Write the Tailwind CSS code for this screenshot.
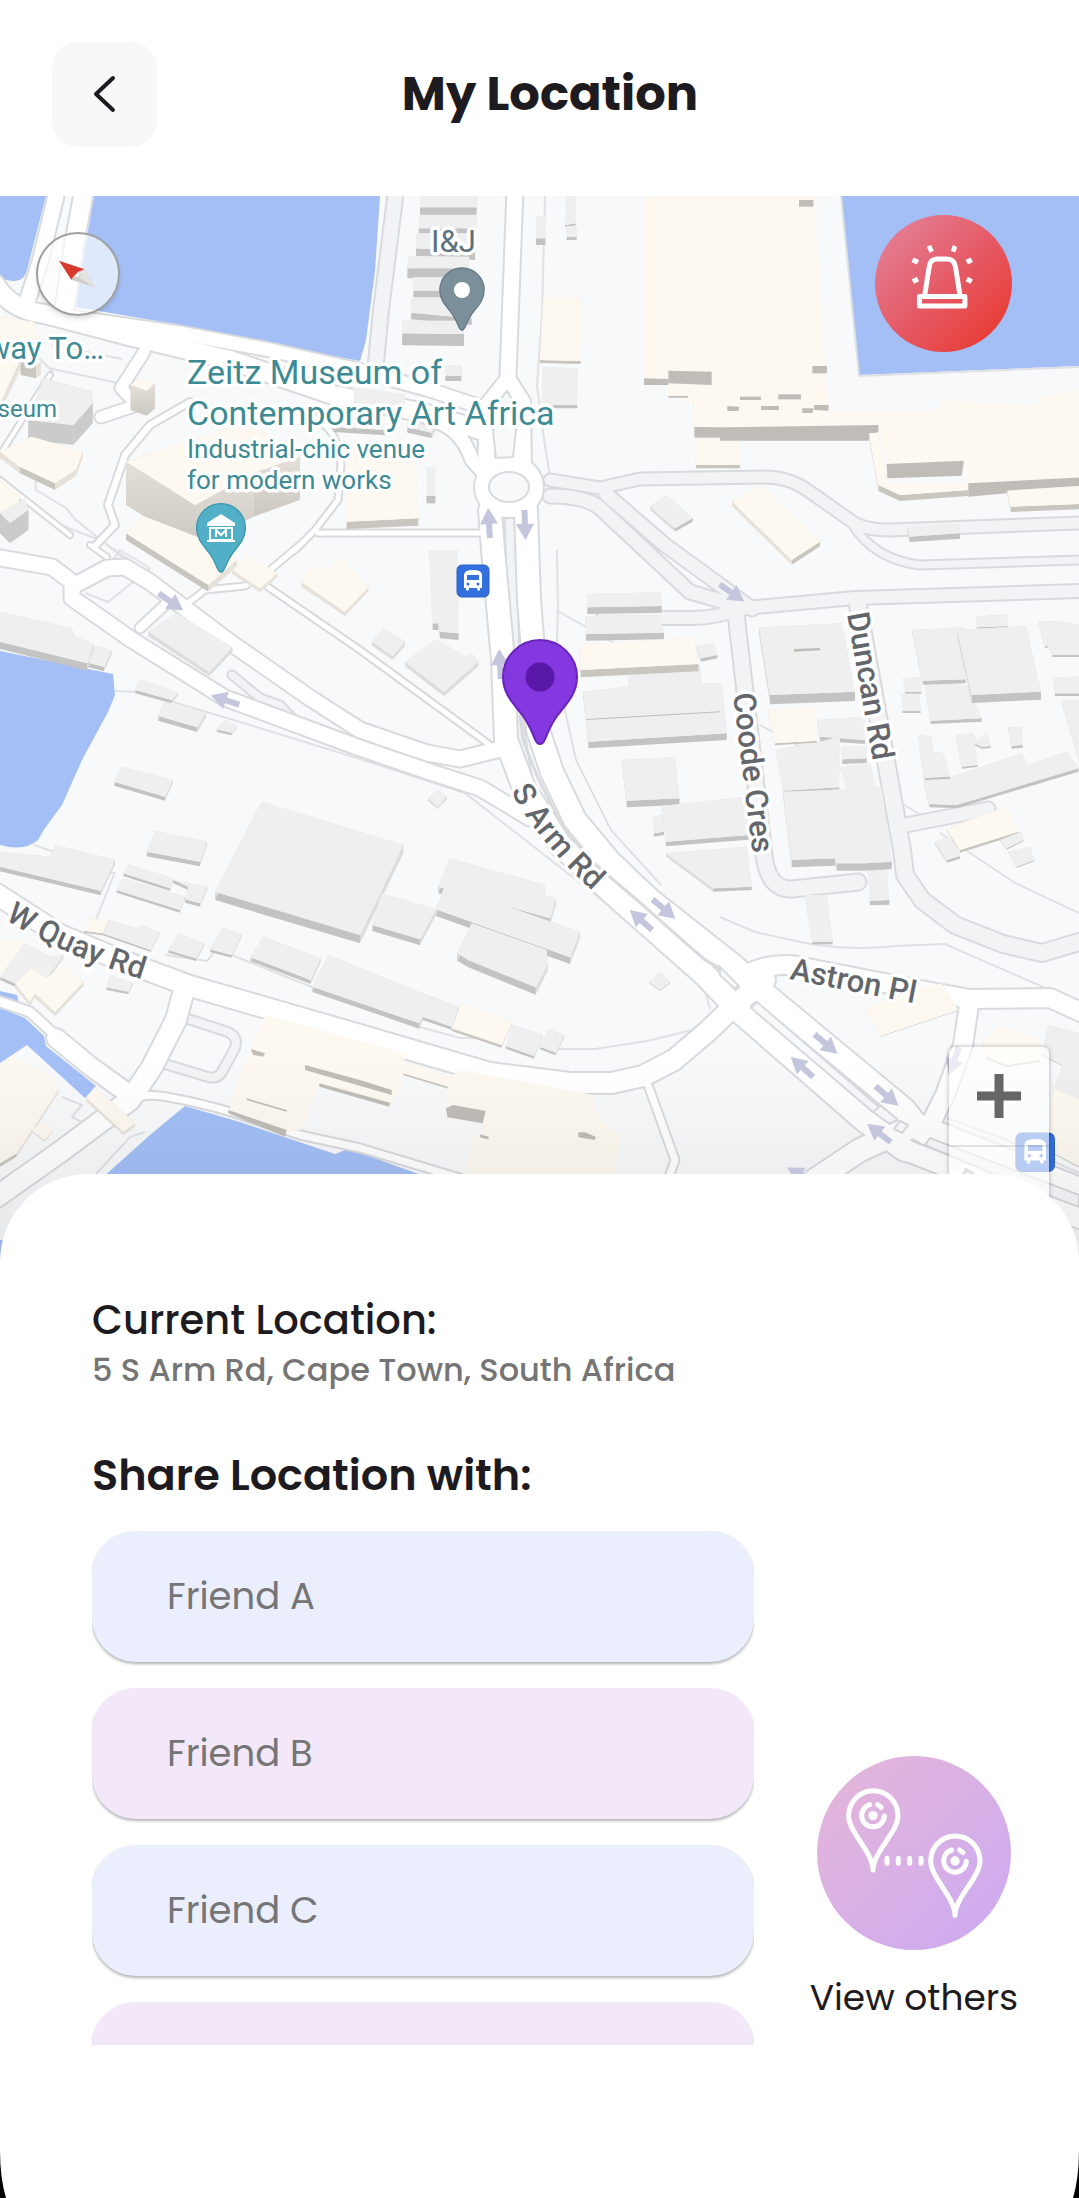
<!DOCTYPE html>
<html lang="en">
<head>
  <meta charset="UTF-8">
  <meta name="viewport" content="width=device-width, initial-scale=1.0">
  <title>My Location</title>
  <script src="https://cdn.jsdelivr.net/npm/@tailwindcss/browser@4"></script>
</head>
<body class="bg-white font-[Poppins,Inter,sans-serif] text-[#1d1b20]">
  <div class="relative flex min-h-screen flex-col overflow-hidden">

    <header class="flex h-[196px] items-center pb-2 pl-[52px] pr-[136px]">
      <button type="button" aria-label="Back" class="flex size-[105px] items-center justify-center rounded-[26px] bg-[#f8f8f8]">
        <svg class="size-12" viewBox="0 0 48 48" fill="none" stroke="#1d1b20" stroke-width="4" stroke-linecap="round" stroke-linejoin="round">
          <path d="M32 8 15 24l17 16" />
        </svg>
      </button>
      <h1 class="flex-1 text-center text-5xl font-bold">My Location</h1>
    </header>

    <section aria-label="Map" class="relative h-[1074px] overflow-hidden bg-[#f8f9fb]">
      <svg id="map" class="h-full w-full" viewBox="0 196 1079 1074" preserveAspectRatio="xMidYMin slice" font-family="Roboto, sans-serif">
        <defs>
          <linearGradient id="shade" x1="0" y1="0" x2="0" y2="1">
            <stop offset="0" stop-color="#000" stop-opacity="0" />
            <stop offset="1" stop-color="#000" stop-opacity=".08" />
          </linearGradient>
          <linearGradient id="wall" x1="0" y1="0" x2="0" y2="1">
            <stop offset="0" stop-color="#e4e0d9" />
            <stop offset="1" stop-color="#cbc7c1" />
          </linearGradient>
          <path id="pin" d="M-37 0a37 37 0 0 1 74 0c0 18-12 28-20 39-12 17-11 28-17 28s-5-11-17-28c-8-11-20-21-20-39z" />
          <path id="arrow" d="M0-15 9 1H3V15h-6V1H-9z" />
          <g id="bus">
            <rect width="32" height="32" rx="5" fill="#3470dd" stroke="#2b60c4" />
            <path d="M7 10q0-5 9-5t9 5v13h-2v2q-3 2-3-2h-8q0 4-3 2v-2H7z" fill="#fff" />
            <path d="M10 10h12v5H10z" fill="#3470dd" />
            <circle cx="11" cy="19" r="1.500" fill="#3470dd" />
            <circle cx="21" cy="19" r="1.500" fill="#3470dd" />
          </g>
          <path id="s-arm" d="M511 791Q540 847 610 906" />
          <path id="w-quay" d="M5 919Q60 955 154 983" />
        </defs>

        <g id="water" fill="#a3bff6">
          <path d="M0 196h46L27 270q-3 12-14 11L0 279z" />
          <path d="M94 196h286l-5 75-9 69-6 21-90-17-90-19-75-13-30-5z" />
          <path d="M841 196h238v170l-220 9z" />
          <path d="M0 651l113 23 2 21-7 17-26 48-20 45-17 23-7 12q-14 12-38 5z" />
          <path d="M0 991l17 4 2 9-19-6zM0 1008l25 10 19 18 2 10 50 40-11 12-58-53-27 18z" />
          <path d="M185 1106l55 16 95 32 10-4 15 3 70 25H102l48-43zM0 1240h4v40H0z" />
        </g>
        <path d="M841 196l18 180 220-9" fill="none" stroke="#dfe1e4" stroke-width="2" />

        <g id="paths" fill="none" stroke="#e0e1e4" stroke-width="2">
          <path d="M545 196l-3 120-5 70 8 60 5 30M556 610l164 94M557 550l1 60-2 60 20 90 35 70 50 55M760 725l120 65 41 25M940 833l75 50 64 30" />
          <path d="M115 691l25 1 110 33 110 34 105 34 160 125 60 45 18 18 7 28M692 1030l-45 11-52 8h-40M720 917l35 15 50 11q45 8 90 3l50-2 105 46" />
          <path d="M20 320l3 22 30 30M52 345l70 14M48 368l70 15M33 440l3 50 30 18 10 12 50 40M60 525l40 15 30 20M100 578l20-28 30 18-15 12M85 593l23 9 25-20" />
          <path d="M115 872l-20 50M34 845l80 28M165 955l42 6 10-12 95 38M420 1027l40 11h20M62 1097l20 8-10 12 15 8M95 1175l35-38 15-5" />
          <path d="M947 1118l60 22 72 33M770 1020h10" />
        </g>

        <g id="roads" fill="none" stroke-linejoin="round" stroke-linecap="round"></g>

        <!-- roundabout and traffic islands -->
        <g fill="#f8f9fb" stroke="#d8dade" stroke-width="2">
          <path d="M507 391l-14 29 5 38 14-1 18 0-2-42q-2-18-21-24z" fill="#fff" stroke="none" />
          <path d="M507 391q-7 8-13 20l-1 20 3 27 17-1 3-27-1-20q-3-12-8-19z" />
          <ellipse cx="509" cy="487" rx="20" ry="15" />
          <path d="M757 1002l-6 6 122 104 6-5z" />
          <path d="M900 1121l8 4-6 8-8-4zM930 1138l-5 7 90 38 64 24v-12z" />
          <path d="M720 967l18 18-3 4-15-14z" />
          <path d="M520 715l3 25 15 38 22 44 30 38 47 40 68 60 15 8" fill="none" stroke-width="3" />
        </g>
        <g id="buildings"></g>
        <rect y="1060" width="1079" height="214" fill="url(#shade)" />
        <g id="arrows" fill="#c3c6dc"></g>

        <g fill="#3c8a94" stroke="#fff" stroke-width="7" stroke-linejoin="round" paint-order="stroke">
          <text x="187" y="384" font-size="34">Zeitz Museum of</text>
          <text x="187" y="425" font-size="34">Contemporary Art Africa</text>
          <text x="187" y="458" font-size="26">Industrial-chic venue</text>
          <text x="187" y="489" font-size="26">for modern works</text>
          <text x="104" y="359" font-size="31" text-anchor="end">way To…</text>
          <text x="57" y="417" font-size="24" text-anchor="end">seum</text>
          <text x="431" y="252" font-size="31" fill="#5c707d">I&amp;J</text>
        </g>
        <g fill="#63666b" stroke="#fff" stroke-width="7" stroke-linejoin="round" paint-order="stroke" font-size="31" font-weight="500">
          <text transform="translate(847 614) rotate(80)">Duncan Rd</text>
          <text transform="translate(733 694) rotate(83)">Coode Cres</text>
          <text transform="translate(789 979) rotate(11)">Astron Pl</text>
          <text><textPath href="#s-arm">S Arm Rd</textPath></text>
          <text><textPath href="#w-quay">W Quay Rd</textPath></text>
          <text transform="translate(953 1186) rotate(28)" fill="#a5a8ac">D</text>
        </g>

        <use href="#pin" transform="translate(462 290) scale(.6)" fill="#7b8f9b" stroke="#627783" stroke-width="2" />
        <circle cx="462" cy="290" r="8" fill="#fff" />
        <use href="#pin" transform="translate(221 528) scale(.66)" fill="#51b0c8" stroke="#3d95ac" stroke-width="2" />
        <path d="M221 514l14 9v3h-28v-3zM209 527h24v13h2v2h-28v-2h2zm2 2v10h20v-10z" fill="#fff" fill-rule="evenodd" />
        <path d="M216 537v-7l5 5 5-5v7" fill="none" stroke="#fff" stroke-width="2" />
        <use href="#bus" x="457" y="565" />
        <use href="#bus" transform="translate(1016 1133) scale(1.2)" />
        <use href="#pin" transform="translate(540 677)" fill="#8338e0" stroke="#6a24bd" stroke-width="2" />
        <circle cx="540" cy="677" r="14.500" fill="#5a18a8" />
      </svg>

      <button type="button" aria-label="Reset north" class="absolute left-9 top-9 flex size-[84px] rounded-full border-2 border-[#a0a0a0] bg-white/65 shadow-md">
        <svg class="size-full" viewBox="37 232 84 84">
          <path d="M59 260l27 9-7 3-4 4-3 4z" fill="#d83a2c" />
          <path d="M86 269l11 19-25-8 3-4q3 2 5 0t-1-4z" fill="#cfcdc9" />
          <path d="M86 269l11 19-17-10q4-3 0-5z" fill="#e4e3e0" />
        </svg>
      </button>

      <button type="button" aria-label="Emergency alert" class="absolute right-[67px] top-[19px] size-[137px] rounded-full bg-linear-135 from-[#e2859f] from-0% via-[#e55a66] via-50% to-[#e83e38] to-85%">
        <svg class="size-full" viewBox="466 74 410 410" fill="none" stroke="#fff" stroke-width="15" stroke-linejoin="round">
          <path d="M615 312l13-82q3-24 24-24h30q21 0 25 24l13 82M599 318h136v28H599z" />
          <path d="M621 169l13-5 8 17-13 6zM699 164l13 6-6 16-13-5zM582 201l16 8-7 13-16-7zM752 201l7 14-15 7-7-13zM576 267l15-8 7 13-15 8zM744 259l15 8-7 13-15-8z" fill="#fff" stroke="none" />
        </svg>
      </button>

      <div class="absolute right-[30px] top-[851px] flex h-[200px] w-[100px] flex-col rounded-md bg-white/65 shadow-[0_0_5px_rgba(0,0,0,0.3)]">
        <button type="button" aria-label="Zoom in" class="flex h-[100px] items-center justify-center border-b-2 border-black/10">
          <svg class="size-11" viewBox="0 0 44 44" stroke="#666" stroke-width="9"><path d="M22 0v44M0 22h44" /></svg>
        </button>
        <button type="button" aria-label="Zoom out" class="flex-1"></button>
      </div>
    </section>

    <main class="relative -mt-24 flex-1 rounded-t-[88px] bg-white pl-[92px] pr-[61px] pt-[121px]">
      <h2 class="text-[40px]/[50px] font-medium">Current Location:</h2>
      <p class="text-[32px]/[50px] font-medium text-[#757575]">5 S Arm Rd, Cape Town, South Africa</p>
      <h2 class="mt-[55px] text-[43px]/[50px] font-semibold">Share Location with:</h2>

      <div class="mt-[31px] flex items-end justify-between">
        <div class="flex h-[514px] w-[662px] flex-col gap-[26px] overflow-hidden text-[37px] text-[#757575]">
          <button type="button" class="h-[131px] shrink-0 rounded-[44px] bg-[#eaeefd] pl-[75px] text-left shadow-[0_2px_3px_rgba(0,0,0,0.3)]">Friend A</button>
          <button type="button" class="h-[131px] shrink-0 rounded-[44px] bg-[#f3e8fa] pl-[75px] text-left shadow-[0_2px_3px_rgba(0,0,0,0.3)]">Friend B</button>
          <button type="button" class="h-[131px] shrink-0 rounded-[44px] bg-[#eaeefd] pl-[75px] text-left shadow-[0_2px_3px_rgba(0,0,0,0.3)]">Friend C</button>
          <button type="button" aria-label="Friend D" class="h-[131px] shrink-0 rounded-[44px] bg-[#f3e8fa] shadow-[0_2px_3px_rgba(0,0,0,0.3)]"></button>
        </div>
        <button type="button" class="mb-[22px] flex flex-col items-center gap-[23px] text-[36px]/[50px]">
          <span class="size-[194px] rounded-full bg-linear-135 from-[#e3b5da] from-10% to-[#ceabf0] to-90%">
            <svg class="size-full" viewBox="105 104 582 582" fill="none" stroke="#fff" stroke-width="15" stroke-linecap="round" stroke-linejoin="round">
              <g id="place">
                <path d="M273 446c0-54-73-113-73-163a74 75 0 0 1 148 0c0 50-75 109-75 163z" />
                <path d="M263 250a34 34 0 1 0 44 34M287 250l10 8" />
                <circle cx="273" cy="283" r="14" fill="#fff" stroke="none" />
              </g>
              <use href="#place" x="246" y="136" />
              <path d="M315 411v15M349 411v15M383 411v15M417 411v15" />
            </svg>
          </span>
          View others
        </button>
      </div>
    </main>

    <!-- rounded screen corners -->
    <svg class="absolute bottom-0 left-0 h-12 w-1.5" viewBox="0 0 6 48"><path d="M0 0q0 28 6 48H0z" /></svg>
    <svg class="absolute bottom-0 right-0 h-12 w-1.5" viewBox="0 0 6 48"><path d="M6 0q0 28-6 48h6z" /></svg>
  </div>

  <script>
    const NS = 'http://www.w3.org/2000/svg';
    const add = (parent, tag, attrs) => {
      const el = document.createElementNS(NS, tag);
      for (const key in attrs) el.setAttribute(key, attrs[key]);
      return parent.appendChild(el);
    };

    // side streets: width, path
    const streets = [
      [14, 'M396 190L381 310 376 362'],
      [11, 'M550 480L600 488 640 479 765 477Q790 477 810 492L850 520Q862 530 890 530L1079 523'],
      [7, 'M852 524Q875 560 920 565L1079 560'],
      [13, 'M606 494L665 545 720 585 752 609'],
      [13, 'M550 496Q585 496 600 508L690 592 745 608'],
      [12, 'M603 618H693Q715 618 745 608L855 598 1079 591'],
      [15, 'M736 614L764 855Q768 890 792 889L858 882'],
      [16, 'M857 600L875 700 902 850 905 875 922 900 955 925 1003 944 1042 953 1079 942'],
      [13, 'M906 825L988 809'],
      [8, 'M185 1018L228 1032Q240 1038 234 1050L223 1070Q218 1080 208 1077L165 1064'],
      [7, 'M232 675L260 698 280 705 298 724'],
      [9, 'M510 520L513 600 514 700 526 775']
    ];

    // main roads: width, path
    const mainRoads = [
      [15, 'M56 196L40 262 26 305'],
      [18, 'M83 196L74 245 64 312'],
      [18, 'M-5 284Q10 310 45 314L133 337 230 360 333 395 420 412 480 430'],
      [13, 'M70 317L180 333 270 350 350 368 430 390 490 410'],
      [11, 'M144 352L121 388 137 405 101 417'],
      [15, 'M515 190L508 375'],
      [16, 'M508 380L488 405 486 470'],
      [16, 'M508 380L522 402 523 470'],
      [13, 'M430 420Q460 425 472 460L490 480'],
      [40, 'M498 487H520'],
      [60, 'M505 487H513'],
      [22, 'M490 510L493 550 503 660 506 740 524 788 560 845 620 900 705 975 740 1012 865 1121 905 1150'],
      [22, 'M526 510L529 600 533 650 538 730 552 772 575 820 610 862 650 900 735 967 760 990 905 1110 920 1130'],
      [20, 'M-5 893L60 935 120 960 190 986 360 1035 490 1073 570 1083 612 1083 643 1076 674 1060 708 1031 735 1005 765 980'],
      [18, 'M745 975Q770 962 797 966L920 990 970 999 1050 998 1085 1014'],
      [18, 'M969 1005L963 1045 945 1095 925 1135'],
      [22, 'M905 1130L860 1150 800 1190'],
      [20, 'M920 1125L1085 1190'],
      [20, 'M900 1148L1085 1220'],
      [7, 'M648 1085L675 1160 668 1180'],
      [20, 'M184 990L176 1020 152 1067 130 1100 60 1152 -5 1198'],
      [9, 'M-5 1000L30 1012 55 1035'],
      [18, 'M56 1038L90 1066 130 1095'],
      [7, 'M143 1096Q160 1092 235 1113L300 1135 360 1148 460 1178'],
      [15, 'M-5 557L52 567 72 582 72 598 132 640 225 698 360 748 430 772 480 788 530 818'],
      [15, 'M75 585L107 568 125 567 150 582 231 643 310 698 360 730 427 753 460 759 505 748'],
      [9, 'M168 602L140 628'],
      [5, 'M188 603L205 590 245 586 270 570 300 545'],
      [5, 'M268 587L360 650 490 745'],
      [6, 'M96 545L115 525 108 505 125 455 150 425 190 402'],
      [4, 'M0 480L70 535M0 455L50 375M90 545L107 557'],
      [5, 'M310 415Q340 430 341 465L338 500 315 530 295 550M318 533L480 533']
    ];

    const roads = document.getElementById('roads');
    for (const [list, fill] of [[streets, '#f1f3f4'], [mainRoads, '#fff']]) {
      for (const [w, d] of list) add(roads, 'path', { d, stroke: '#d8dade', 'stroke-width': w + 4 });
      for (const [w, d] of list) add(roads, 'path', { d, stroke: fill, 'stroke-width': w });
    }

    // building tiles, three units per map pixel
    // each line: kind (g grey, c cream, s shaded wall), wall height, roof outline
    const tiles = [
      [0, 190, `
        c 30 0,380 100,395 120,440 60,510 0,640
        c 40 62,515 90,500 122,515 108,525
        g 60 130,565 275,605 278,640 220,705 85,690
        c 75 392,585 425,562 465,580 440,602
        c 20 0,785 95,740 248,785 228,838 165,880 60,830
        c 20 0,870 60,915 50,960 0,985
        g 60 0,970 75,925 85,960 30,1000
        c 130 378,815 680,715 760,705 900,800 760,850 585,945
        c 20 378,1030 430,978 590,1040 690,1090 710,1110 625,1185`],
      [360, 190, `
        g 22 180,0 352,0 350,52 180,52
        g 18 178,75 350,75 350,115 176,115
        g 25 170,130 345,130 345,185 168,175
        g 30 145,198 327,200 327,235 142,235
        g 20 160,262 320,262 320,302 160,302
        g 20 155,325 335,325 335,385 153,368
        g 36 128,392 312,392 312,432 126,430
        g 16 256,527 306,527 304,557 256,557
        g 0 -20,590 135,612 135,650 -20,640
        g 16 -80,690 75,700 75,720 -80,710
        g 16 142,700 225,708 215,728 142,712
        g 22 200,832 226,832 226,918 199,918
        g 20 528,78 558,78 556,145 528,145
        g 6 618,0 648,0 648,100 615,105
        g 10 618,108 652,110 650,140 620,140
        c 9 550,322 664,322 662,513 540,510
        g 10 548,532 654,535 652,645 545,645
        c 22 -40,760 165,770 175,985 -40,995
        c 0 852,0 1360,0 1405,660 1080,720 1000,640 925,618 925,560 852,565
        s 0 925,542 1055,545 1055,585 925,580
        s 0 852,565 925,567 925,585 852,585
        s 0 1000,632 1080,632 1080,645 1000,645
        s 0 1003,710 1080,710 1080,743 1003,743
        s 0 925,618 985,618 985,623 925,623
        c 10 1005,745 1135,745 1140,825 1008,825
        g 10 920,915 998,985 945,1015 870,950`],
      [720, 190, `
        c 0 -80,620 325,640 325,665 660,660 665,630 950,645 960,620 1080,600 1080,865 745,880 735,815 500,820 475,705 0,712 -80,710
        s 0 0,712 475,705 475,725 445,752 0,752
        c 18 447,730 475,728 500,865 510,880 745,880 745,900 540,915 475,885
        s 0 500,822 732,812 725,857 502,865
        s 0 745,880 1080,862 1080,890 745,920
        c 16 862,902 1080,888 1080,942 872,950
        s 0 237,30 280,30 280,50 237,50
        s 0 277,528 321,528 321,550 277,550
        s 0 60,620 123,620 123,630 60,630
        s 0 175,613 243,613 243,628 175,628
        s 0 22,648 58,650 55,663 22,663
        s 0 123,648 177,648 177,660 123,660
        s 0 247,655 280,655 278,669 247,669
        s 0 282,645 326,645 325,662 282,660
        g 16 562,1015 720,1002 720,1030 568,1040
        c 14 37,935 125,885 300,1055 215,1110`],
      [0, 550, `
        g 22 0,185 215,235 225,260 280,280 262,340 0,275
        g 14 285,287 335,300 312,350 265,338
        g 14 445,245 530,190 697,292 628,365
        g 10 420,388 533,428 515,450 405,420
        g 14 490,455 618,488 592,532 475,498
        g 8 675,510 710,527 695,548 650,538
        g 12 365,650 518,690 495,740 342,695
        g 14 465,843 620,875 600,935 440,905
        g 14 0,905 150,920 165,885 345,930 302,1022 0,950
        g 8 385,943 520,985 510,1015 370,970
        g 10 520,990 622,1010 600,1060 555,1048 565,1010
        g 8 370,985 555,1040 540,1080 350,1020
        g 25 785,755 1210,885 1080,1155 645,1025
        c 14 905,97 930,50 985,55 1025,25 1105,110 1035,185
        c 12 697,60 745,15 832,70 780,115`],
      [360, 550, `
        g 20 208,0 292,0 296,250 240,245 235,220 218,220
        g 12 70,235 135,275 98,318 37,275
        g 14 135,335 230,268 315,320 335,310 355,335 252,425
        g 20 682,132 903,127 905,168 682,172
        g 20 676,198 895,195 912,248 678,252
        g 20 670,425 805,410 808,350 1020,345 1025,400 1085,400 1100,550 685,575
        s 0 680,507 1080,484 1080,487 680,510
        c 22 658,285 1000,262 1015,342 662,360
        g 10 1010,290 1060,278 1072,315 1022,325
        g 20 787,630 945,622 958,745 800,752
        g 10 880,800 910,795 912,845 882,850
        g 14 908,768 1155,740 1165,855 918,875
        g 10 918,910 1160,890 1175,1010 1060,1015
        g 8 233,720 260,740 232,770 205,745
        g 20 270,925 555,1005 553,1035 588,1045 570,1105 235,1010`],
      [720, 550, `
        g 28 118,232 365,220 405,425 150,435
        s 0 222,297 300,294 300,301 222,305
        g 12 292,510 435,500 435,570 300,560
        g 6 168,600 300,575 360,560 358,712 190,722
        c 6 145,480 285,470 290,572 165,580
        g 0 360,650 450,640 470,720 380,725
        g 14 365,590 440,590 440,625 367,628
        g 14 440,900 495,900 508,1050 450,1052
        g 22 190,725 485,715 515,935 435,940 350,940 345,925 215,930
        g 10 615,400 740,405 785,505 632,512
        g 12 577,240 735,232 737,388 608,392
        g 4 768,200 860,193 865,228 770,232
        g 24 712,240 918,228 963,425 755,435
        g 6 550,385 605,382 605,425 555,425
        g 6 543,432 598,432 602,483 548,483
        g 6 955,215 1010,213 1080,225 1080,315 997,315 985,285 975,290
        g 8 1000,382 1080,380 1080,430 1005,430
        g 6 1025,452 1080,450 1080,640
        g 8 865,532 905,530 908,585 875,588
        g 6 707,555 760,550 770,575 800,545 812,588 785,590 765,580 772,645 725,650
        g 10 595,555 635,560 640,605 670,610 690,682 905,610 925,645 1040,605 1075,655 710,765 628,762 612,690
        s 0 615,685 690,680 690,686 615,690
        c 8 680,835 860,770 895,845 720,900
        g 8 645,875 690,860 720,918 680,930
        g 4 865,905 930,890 943,930 890,950
        g 4 840,870 905,845 910,870 860,895
        g 8 255,1035 320,1035 338,1175 277,1175`],
      [0, 900, `
        g 6 325,60 410,85 425,75 480,98 452,150 308,100
        c 6 270,55 325,62 308,100 252,92
        g 8 535,100 613,130 588,175 505,150
        g 8 668,82 725,102 695,165 630,148
        g 12 790,110 962,175 932,240 752,172
        g 16 985,165 1293,290 1258,370 937,260
        g 8 330,225 398,250 385,275 320,262
        c 0 0,120 70,120 80,140 0,220
        g 10 75,130 150,170 190,165 140,235 45,250 0,230
        c 14 190,195 250,245 165,335 105,280 90,305 45,250 95,205 140,235
        c 10 0,500 40,470 155,530 175,570 50,760 0,790
        c 6 125,665 158,690 135,720 95,690
        c 10 285,560 405,670 370,695 260,595
        c 0 795,345 1215,460 1205,560 1170,615 960,555 900,690 850,700 685,640 710,550 765,420
        s 0 915,495 1080,540 1175,570 1175,585 915,510
        s 0 958,550 1170,608 1168,620 958,560
        s 0 685,630 860,690 855,710 685,640
        s 0 752,447 795,460 790,470 760,465
        s 0 740,595 860,630 860,635 740,600`],
      [360, 900, `
        g 18 65,-20 228,28 180,118 37,75
        g 20 255,-45 660,95 630,172 228,28
        g 22 335,70 560,150 563,190 527,262 325,180 292,160
        g 10 215,288 295,320 275,380 188,350
        c 8 305,310 457,365 425,435 275,385
        g 8 460,375 548,405 522,468 437,438
        g 8 565,388 613,405 587,458 540,440
        g 6 900,215 930,245 900,268 868,245
        c 6 130,520 145,485 270,530 265,560
        c 0 305,510 700,585 700,630 755,690 785,710 760,830 310,830 340,710 365,700 375,635 260,620 268,530
        s 0 258,625 280,615 377,633 368,670 262,652
        s 0 360,703 386,710 386,718 362,713
        s 0 655,697 675,697 707,710 705,720 655,712`],
      [720, 900, `
        c 2 437,325 600,265 665,250 715,330 482,408
        c 6 790,430 840,375 960,420 960,480 860,495 800,470
        g 3 985,375 1080,400 1080,600 1000,565 1028,495 965,465
        c 4 1000,565 1080,600 1080,800 985,750`]
    ];
    const roofs = { g: '#efefef', c: '#fdf9f1', s: '#c0bcb8' };
    const front = { g: '#c3c3c3', c: '#c9c5bf' };
    const side = { g: '#dddddd', c: '#e6e1da' };
    const tall = { g: '#cbcbcb', c: 'url(#wall)' };

    const buildings = document.getElementById('buildings');
    for (const [x, y, rows] of tiles) {
      const tile = add(buildings, 'g', { transform: `translate(${x} ${y}) scale(.33333)` });
      for (const row of rows.trim().split('\n')) {
        const [kind, height, ...pts] = row.trim().split(' ');
        const roof = pts.map(p => p.split(',').map(Number));
        const h = Number(height);
        if (h) {
          roof.forEach(([ax, ay], i) => {
            const [bx, by] = roof[(i + 1) % roof.length];
            const flat = bx < ax && Math.abs(by - ay) < Math.abs(bx - ax) * 0.65;
            const walls = h >= 60 ? tall : flat ? front : side;
            add(tile, 'path', {
              d: `M${ax} ${ay}L${bx} ${by}V${by + h}L${ax} ${ay + h}Z`,
              fill: walls[kind]
            });
          });
        }
        add(tile, 'polygon', { points: pts.join(' '), fill: roofs[kind] });
      }
    }

    // one-way arrows: x, y, heading
    const arrows = [
      [489, 523, -3], [525, 525, 178], [171, 602, 125], [225, 700, -72], [500, 664, -3],
      [732, 593, 125], [664, 909, 130], [641, 920, -48], [826, 1044, 130], [802, 1067, -48],
      [887, 1096, 130], [879, 1133, -52], [800, 1175, -60], [954, 1061, 200]
    ];
    const arrowLayer = document.getElementById('arrows');
    for (const [x, y, heading] of arrows) {
      add(arrowLayer, 'use', { href: '#arrow', transform: `translate(${x} ${y}) rotate(${heading})` });
    }
  </script>
</body>
</html>
